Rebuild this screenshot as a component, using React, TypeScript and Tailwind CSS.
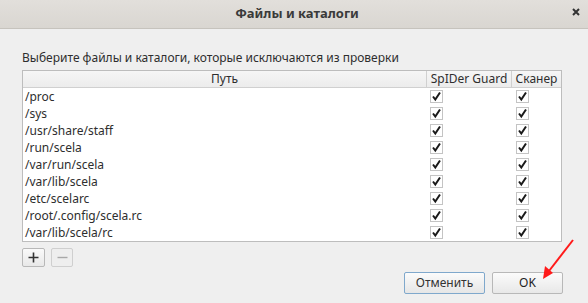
import React from "react";

const rows = [
  "/proc",
  "/sys",
  "/usr/share/staff",
  "/run/scela",
  "/var/run/scela",
  "/var/lib/scela",
  "/etc/scelarc",
  "/root/.config/scela.rc",
  "/var/lib/scela/rc",
];

function Check() {
  return (
    <div className="w-[13px] h-[13px] border border-[#c4c4c4] bg-white flex items-center justify-center">
      <svg width="11" height="11" viewBox="0 0 11 11">
        <path d="M2 5.5 L4.3 8.5 L9 1.5" fill="none" stroke="#1a1a1a" strokeWidth="2" />
      </svg>
    </div>
  );
}

export default function App() {
  return (
    <div
      className="w-[588px] h-[303px] flex flex-col bg-[#efefef] text-[#2e2e2e] relative overflow-hidden"
      style={{ fontFamily: '"Noto Sans", "DejaVu Sans", sans-serif' }}
    >
      <div className="h-[29px] shrink-0 bg-gradient-to-b from-[#e2dfdb] to-[#d9d6d1] border-b border-[#c6c3bd] relative flex items-center justify-center">
        <span className="text-[13px] font-bold text-[#3a3a3a] pl-[6px]">Файлы и каталоги</span>
        <svg className="absolute left-[572px] top-[8px]" width="8" height="8" viewBox="0 0 8 8">
          <path d="M1 1 L7 7 M7 1 L1 7" stroke="#333" strokeWidth="2" />
        </svg>
      </div>
      <div className="flex flex-col px-[22px] pt-[20px]">
        <div className="text-[12px] leading-[17px] h-[21px]">
          Выберите файлы и каталоги, которые исключаются из проверки
        </div>
        <div className="w-[540px] border border-[#bdbdbd] bg-white text-[12px]">
          <div className="flex h-[17px] bg-gradient-to-b from-[#f6f6f6] to-[#ececec] border-b border-[#d0d0d0] leading-[16px]">
            <div className="w-[404px] text-center border-r border-[#d0d0d0]">Путь</div>
            <div className="w-[85px] text-center border-r border-[#d0d0d0]">SpIDer Guard</div>
            <div className="flex-1 text-center">Сканер</div>
          </div>
          {rows.map((r) => (
            <div key={r} className="flex h-[17px] items-center">
              <div className="w-[404px] pl-[2px] leading-[17px]">{r}</div>
              <div className="w-[85px] pl-[3px] flex items-center">
                <Check />
              </div>
              <div className="flex-1 pl-[4px] flex items-center">
                <Check />
              </div>
            </div>
          ))}
        </div>
        <div className="flex gap-[6px] mt-[6px]">
          <div className="w-[23px] h-[19px] border border-[#b8b8b8] rounded-[2px] bg-gradient-to-b from-[#fafafa] to-[#e8e8e8] flex items-center justify-center">
            <svg width="11" height="11" viewBox="0 0 11 11">
              <path d="M5.5 0.5 V10.5 M0.5 5.5 H10.5" stroke="#333" strokeWidth="1.6" />
            </svg>
          </div>
          <div className="w-[22px] h-[19px] border border-[#cfcfcf] rounded-[2px] bg-[#eeeeee] flex items-center justify-center">
            <svg width="11" height="11" viewBox="0 0 11 11">
              <path d="M0.5 5.5 H10.5" stroke="#a8a8a8" strokeWidth="1.4" />
            </svg>
          </div>
        </div>
        <div className="flex justify-end gap-[7px] mt-[5px] pr-[3px]">
          <div className="w-[81px] h-[22px] border border-[#7fa8cc] rounded-[2px] bg-gradient-to-b from-[#fbfbfb] to-[#e6e6e6] flex items-center justify-center text-[12px] text-[#333]">
            Отменить
          </div>
          <div className="w-[71px] h-[22px] border border-[#b8b8b8] rounded-[2px] bg-gradient-to-b from-[#fbfbfb] to-[#e8e8e8] flex items-center justify-center text-[12px] text-[#222]">
            OK
          </div>
        </div>
      </div>
      <svg className="absolute left-0 top-0 pointer-events-none" width="588" height="303">
        <line x1="573" y1="240" x2="549" y2="271" stroke="#ff1a1a" strokeWidth="2" />
        <path d="M543 279 L545 266 L553 273 Z" fill="#ff1a1a" />
      </svg>
    </div>
  );
}
